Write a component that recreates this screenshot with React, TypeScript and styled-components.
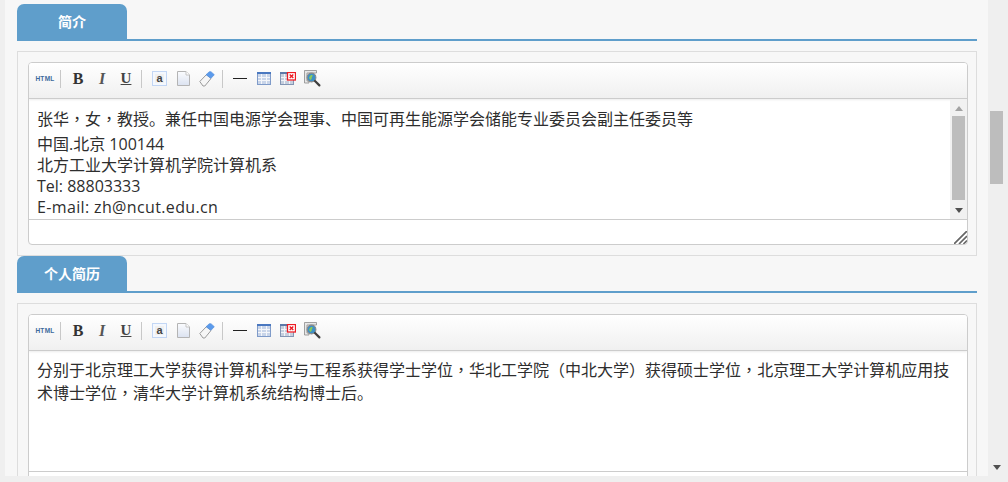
import { createGlobalStyle, styled } from "styled-components";

const GlobalStyle = createGlobalStyle`
  html, body {
    margin: 0;
    padding: 0;
    background: #efefef;
    overflow: hidden;
  }
`;

const SourceIcon = () => (
  <svg width="15" height="15" viewBox="0 0 15 15">
    <rect x="0.5" y="0.5" width="14" height="14" fill="#f4f8fe" stroke="#8fb4ee" strokeDasharray="1 1" />
    <rect x="3" y="3" width="9" height="9" fill="#f0f0f0" />
    <text x="7.5" y="11" textAnchor="middle" fontSize="11" fontWeight="700" fontFamily="Liberation Sans, sans-serif" fill="#444">a</text>
  </svg>
);

const PageIcon = () => (
  <svg width="13" height="15" viewBox="0 0 13 15">
    <defs>
      <linearGradient id="pageFill" x1="0" y1="0" x2="0" y2="1">
        <stop offset="0" stopColor="#fbfcfe" />
        <stop offset="1" stopColor="#dbe2f0" />
      </linearGradient>
    </defs>
    <path d="M.5.5h8.5l3.5 3.5v10.5H.5z" fill="url(#pageFill)" stroke="#b4b4b4" />
    <path d="M9 .5V4h3.5" fill="#fff" stroke="#c4c4c4" />
  </svg>
);

const EraserIcon = () => (
  <svg width="16" height="16" viewBox="0 0 16 16">
    <path d="M.8 10.5 7.5 3.5l4.5 4-6.2 7.5H4z" fill="#f6f6f6" stroke="#9a9a9a" />
    <path d="M7 3.8 10.3.7h1.7l3.3 3-3.3 3.6z" fill="#5b9bec" stroke="#4f8ad6" strokeWidth="0.6" />
  </svg>
);

const LineIcon = () => (
  <svg width="14" height="16" viewBox="0 0 14 16">
    <rect x="0" y="7" width="14" height="1" fill="#222" />
  </svg>
);

const TableIcon = () => (
  <svg width="14" height="13" viewBox="0 0 14 13">
    <rect x="0.5" y="0.5" width="13" height="12" fill="#c9d5e9" stroke="#7f9bc9" />
    <rect x="0" y="0" width="14" height="2" fill="#4a78c0" />
    <path d="M1 5.5h12M1 8.5h12M4.5 2v10M9.5 2v10" stroke="#f4f6fa" strokeWidth="1" fill="none" />
  </svg>
);

const TableDeleteIcon = () => (
  <svg width="16" height="13" viewBox="0 0 16 13">
    <rect x="0.5" y="0.5" width="13" height="12" fill="#c6cfde" stroke="#8496b4" />
    <rect x="0" y="0" width="14" height="2" fill="#5c79a8" />
    <path d="M1 5.5h12M1 8.5h12M4.5 2v10M9.5 2v10" stroke="#f2f4f8" strokeWidth="1" fill="none" />
    <rect x="7.5" y="0.5" width="8" height="7.5" fill="#fff" stroke="#ec1c24" strokeWidth="1.3" />
    <path d="M9.7 2.5l3.6 3.5M13.3 2.5l-3.6 3.5" stroke="#ec1c24" strokeWidth="1.4" />
  </svg>
);

const PreviewIcon = () => (
  <svg width="17" height="17" viewBox="0 0 17 17">
    <path d="M.5.5h12v2.5H3v8h2v2H.5z" fill="#e8e8e8" stroke="#8c8c8c" strokeWidth="0.8" />
    <circle cx="7.5" cy="7.5" r="4.4" fill="#3d90c6" stroke="#8a8a8a" strokeWidth="1.1" />
    <path d="M5.2 7.3c1-2.3 2.8-2.5 3.4-1.9.5.8-1 1.1-.8 2.3.2 1-1 2.1-1.5 2.3-.4-1-1.5-1.1-1.1-2.7z" fill="#8ac95a" />
    <path d="m11 11 4.4 4.4" stroke="#3e3e3e" strokeWidth="2.2" strokeLinecap="round" />
  </svg>
);

const GripIcon = () => (
  <svg width="13" height="13" viewBox="0 0 13 13">
    <path d="M0 13 13 0M5 13l8-8M9.5 13 13 9.5" stroke="#666" strokeWidth="1.7" fill="none" />
  </svg>
);

const Toolbar = () => (
  <ToolbarRow>
    <ToolButton><HtmlLabel>HTML</HtmlLabel></ToolButton>
    <ToolDivider />
    <ToolButton><BoldGlyph>B</BoldGlyph></ToolButton>
    <ToolButton><ItalicGlyph>I</ItalicGlyph></ToolButton>
    <ToolButton><UnderGlyph>U</UnderGlyph></ToolButton>
    <ToolDivider />
    <ToolButton><SourceIcon /></ToolButton>
    <ToolButton><PageIcon /></ToolButton>
    <ToolButton><EraserIcon /></ToolButton>
    <ToolDivider />
    <ToolButton><LineIcon /></ToolButton>
    <ToolButton><TableIcon /></ToolButton>
    <ToolButton><TableDeleteIcon /></ToolButton>
    <ToolButton><PreviewIcon /></ToolButton>
  </ToolbarRow>
);

// the commas and brackets sit centred in their cell in the original
const withPunct = (text: string) =>
  text.split(/([，（）])/).map((part, i) =>
    /^[，（）]$/.test(part) ? <Punct key={i}>{part}</Punct> : part
  );

export default function App() {
  return (
    <>
      <GlobalStyle />
      <Page>
        <Main>
          <TabBar>
            <Tab>简介</Tab>
          </TabBar>
          <Panel>
            <Editor>
              <Toolbar />
              <EditArea>
                <EditText>
                  <Lead>
                    {withPunct("张华，女，教授。兼任中国电源学会理事、中国可再生能源学会储能专业委员会副主任委员等")}
                  </Lead>
                  <div>
                    中国.北京 100144
                    <br />
                    北方工业大学计算机学院计算机系
                    <br />
                    Tel: 88803333
                    <br />
                    <Email>E-mail: zh@ncut.edu.cn</Email>
                  </div>
                </EditText>
                <InnerScrollbar>
                  <ArrowUp />
                  <InnerThumb />
                  <ArrowDown />
                </InnerScrollbar>
              </EditArea>
              <EditorFooter>
                <GripIcon />
              </EditorFooter>
            </Editor>
          </Panel>
          <TabBar>
            <Tab>个人简历</Tab>
          </TabBar>
          <Panel>
            <Editor>
              <Toolbar />
              <EditArea>
                <EditText $top={8}>
                  <Bio>
                    {withPunct("分别于北京理工大学获得计算机科学与工程系获得学士学位，华北工学院（中北大学）获得硕士学位，北京理工大学计算机应用技")}
                    <br />
                    {withPunct("术博士学位，清华大学计算机系统结构博士后。")}
                  </Bio>
                </EditText>
              </EditArea>
              <EditorFooter />
            </Editor>
          </Panel>
        </Main>
        <PageScrollbar>
          <PageThumb />
          <PageArrow />
        </PageScrollbar>
      </Page>
    </>
  );
}

const Page = styled.div`
  display: flex;
  height: 476px;
  overflow: hidden;
  padding-left: 5px;
  background: #efefef;
  font-family: "Open Sans", "Noto Sans CJK SC", sans-serif;
`;

const Main = styled.div`
  flex: 0 0 983px;
  box-sizing: border-box;
  height: 476px;
  overflow: hidden;
  padding: 4px 11px 0 12px;
  background: #f7f7f7;
`;

const TabBar = styled.div`
  height: 35px;
  border-bottom: 2px solid #5f9ecb;
`;

const Tab = styled.div`
  width: 110px;
  height: 35px;
  border-radius: 7px 7px 0 0;
  background: #5f9ecb;
  color: #fff;
  font-size: 14px;
  font-weight: 700;
  line-height: 36px;
  text-align: center;
`;

const Panel = styled.div`
  box-sizing: border-box;
  margin-top: 10px;
  padding: 10px 8px 10px 10px;
  border: 1px solid #ddd;
  height: 205px;
`;

const Editor = styled.div`
  box-sizing: border-box;
  height: 183px;
  border: 1px solid #ccc;
  border-radius: 4px;
  background: #fff;
  overflow: hidden;
`;

const ToolbarRow = styled.div`
  display: flex;
  align-items: center;
  box-sizing: border-box;
  height: 36px;
  padding: 0 0 4px 4px;
  border-bottom: 1px solid #ccc;
  background: linear-gradient(#ffffff, #f0f0f0);
  box-shadow: 0 1px 2px rgba(0, 0, 0, 0.08);
`;

const ToolButton = styled.div`
  display: flex;
  align-items: center;
  justify-content: center;
  width: 24px;
  height: 18px;
`;

const ToolDivider = styled.div`
  width: 1px;
  height: 18px;
  margin: 0 5px 0 3px;
  background: #c8c8c8;
`;

const HtmlLabel = styled.span`
  color: #3c6a9c;
  font-family: "Liberation Sans", sans-serif;
  font-size: 6.5px;
  font-weight: 700;
  letter-spacing: 0.3px;
`;

const BoldGlyph = styled.span`
  color: #333;
  font-family: "Liberation Serif", serif;
  font-size: 16px;
  font-weight: 700;
`;

const ItalicGlyph = styled(BoldGlyph)`
  font-style: italic;
  color: #555;
`;

const UnderGlyph = styled(BoldGlyph)`
  text-decoration: underline;
  font-size: 15px;
  color: #444;
`;

const EditArea = styled.div`
  display: flex;
  height: 120px;
`;

const EditText = styled.div<{ $top?: number }>`
  flex: 1;
  box-sizing: border-box;
  padding: ${(p) => p.$top ?? 10}px 8px 0;
  color: #2e2e2e;
  font-size: 16px;
  line-height: 21px;
`;

const Lead = styled.div`
  margin-bottom: 4px;
`;

const Bio = styled.div`
  line-height: 23px;
`;

const Punct = styled.span`
  font-family: "Noto Sans CJK TC", sans-serif;
  line-height: 0;
`;

const Email = styled.span`
  letter-spacing: 0.36px;
`;

const InnerScrollbar = styled.div`
  flex: 0 0 17px;
  display: flex;
  flex-direction: column;
  align-items: center;
  background: #f1f1f1;
`;

const ArrowUp = styled.div`
  width: 0;
  height: 0;
  margin: 7px 0 5px;
  border-left: 4px solid transparent;
  border-right: 4px solid transparent;
  border-bottom: 5px solid #a3a3a3;
`;

const InnerThumb = styled.div`
  width: 13px;
  height: 84px;
  background: #bdbdbd;
`;

const ArrowDown = styled.div`
  width: 0;
  height: 0;
  margin-top: 8px;
  border-left: 4px solid transparent;
  border-right: 4px solid transparent;
  border-top: 5px solid #505050;
`;

const EditorFooter = styled.div`
  display: flex;
  justify-content: flex-end;
  align-items: flex-end;
  height: 24px;
  border-top: 1px solid #ccc;
`;

const PageScrollbar = styled.div`
  flex: 0 0 20px;
  display: flex;
  flex-direction: column;
  align-items: flex-start;
  padding: 111px 0 0 2px;
  box-sizing: border-box;
  height: 476px;
`;

const PageThumb = styled.div`
  width: 13px;
  height: 73px;
  background: #bdbdbd;
`;

const PageArrow = styled.div`
  width: 0;
  height: 0;
  margin: auto 0 6px 3px;
  border-left: 4px solid transparent;
  border-right: 4px solid transparent;
  border-top: 5px solid #505050;
`;
